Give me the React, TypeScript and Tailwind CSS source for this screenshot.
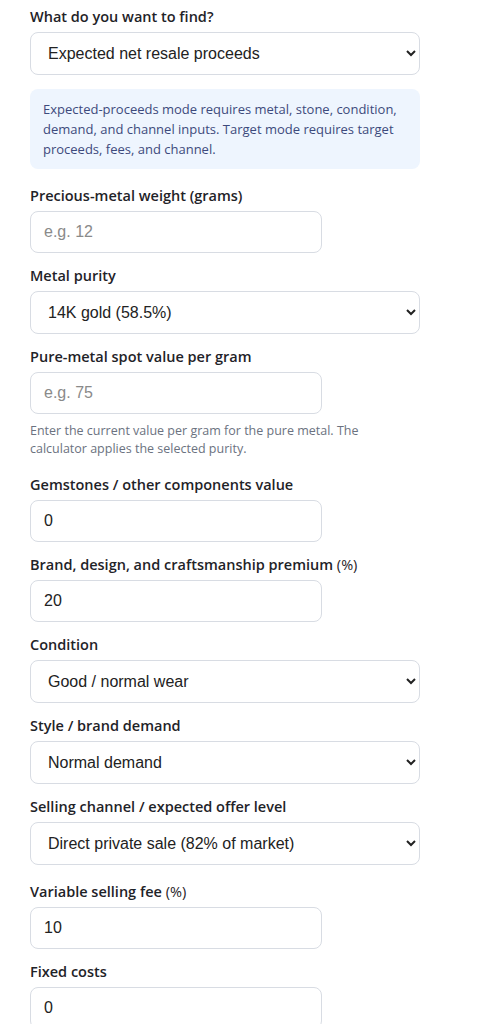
import { useState } from 'react';

const labelCls =
  "block text-[14.5px] leading-[14px] font-semibold text-[#1f2328] mb-[8px] [font-family:'Open_Sans',sans-serif]";
const inputCls =
  "block h-[42px] rounded-[8px] border border-[#d8dce3] bg-white px-[13px] text-[16px] text-[#222] placeholder:text-[#8a8a8a] outline-none [font-family:'Liberation_Sans',Arial,sans-serif]";
const selectCls =
  "block h-[43px] w-[390px] rounded-[8px] border border-[#d8dce3] bg-white pl-[13px] pr-[8px] text-[16px] text-[#222] outline-none [font-family:'Liberation_Sans',Arial,sans-serif]";

function NumberField({
  label,
  unit,
  placeholder,
  value,
  help,
}: {
  label: string;
  unit?: string;
  placeholder?: string;
  value?: string;
  help?: string;
}) {
  const [v, setV] = useState(value ?? '');
  return (
    <div className="mb-[16px]">
      <label className={labelCls}>
        {label}
        {unit && <span className="font-normal"> {unit}</span>}
      </label>
      <input
        className={`${inputCls} w-[292px]`}
        inputMode="decimal"
        placeholder={placeholder}
        value={v}
        onChange={(e) => setV(e.target.value)}
      />
      {help && (
        <p className="mt-[8px] pb-[4px] w-[345px] text-[12.5px] leading-[18px] text-[#6b7280] [font-family:'Open_Sans',sans-serif]">
          {help}
        </p>
      )}
    </div>
  );
}

function SelectField({ label, options }: { label: string; options: string[] }) {
  return (
    <div className="mb-[16px]">
      <label className={labelCls}>{label}</label>
      <select className={selectCls} defaultValue={options[0]}>
        {options.map((o) => (
          <option key={o}>{o}</option>
        ))}
      </select>
    </div>
  );
}

export default function App() {
  return (
    <div className="min-h-screen bg-white">
      <form className="pl-[30px] pt-[10px]" onSubmit={(e) => e.preventDefault()}>
        <div className="mb-[14px]">
          <label className={labelCls}>What do you want to find?</label>
          <select className={selectCls} defaultValue="proceeds">
            <option value="proceeds">Expected net resale proceeds</option>
            <option value="target">Required asking price for target proceeds</option>
          </select>
        </div>

        <div className="mb-[20px] w-[390px] rounded-[8px] bg-[#eef5fe] px-[13px] py-[10px] text-[13px] leading-[20px] text-[#3d4a7c] [font-family:'Open_Sans',sans-serif]">
          Expected-proceeds mode requires metal, stone, condition, demand, and channel inputs. Target
          mode requires target proceeds, fees, and channel.
        </div>

        <NumberField label="Precious-metal weight (grams)" placeholder="e.g. 12" />
        <SelectField
          label="Metal purity"
          options={['14K gold (58.5%)', '10K gold (41.7%)', '18K gold (75%)', '22K gold (91.6%)', 'Sterling silver (92.5%)', 'Platinum (95%)']}
        />
        <NumberField
          label="Pure-metal spot value per gram"
          placeholder="e.g. 75"
          help="Enter the current value per gram for the pure metal. The calculator applies the selected purity."
        />
        <NumberField label="Gemstones / other components value" value="0" />
        <NumberField label="Brand, design, and craftsmanship premium" unit="(%)" value="20" />
        <SelectField
          label="Condition"
          options={['Good / normal wear', 'Excellent / like new', 'Fair / visible wear', 'Poor / needs repair']}
        />
        <SelectField label="Style / brand demand" options={['Normal demand', 'High demand', 'Low demand']} />
        <div className="pb-[4px]">
          <SelectField
            label="Selling channel / expected offer level"
            options={['Direct private sale (82% of market)', 'Consignment (70% of market)', 'Pawn / cash buyer (45% of market)']}
          />
        </div>
        <NumberField label="Variable selling fee" unit="(%)" value="10" />
        <NumberField label="Fixed costs" value="0" />
      </form>
    </div>
  );
}
